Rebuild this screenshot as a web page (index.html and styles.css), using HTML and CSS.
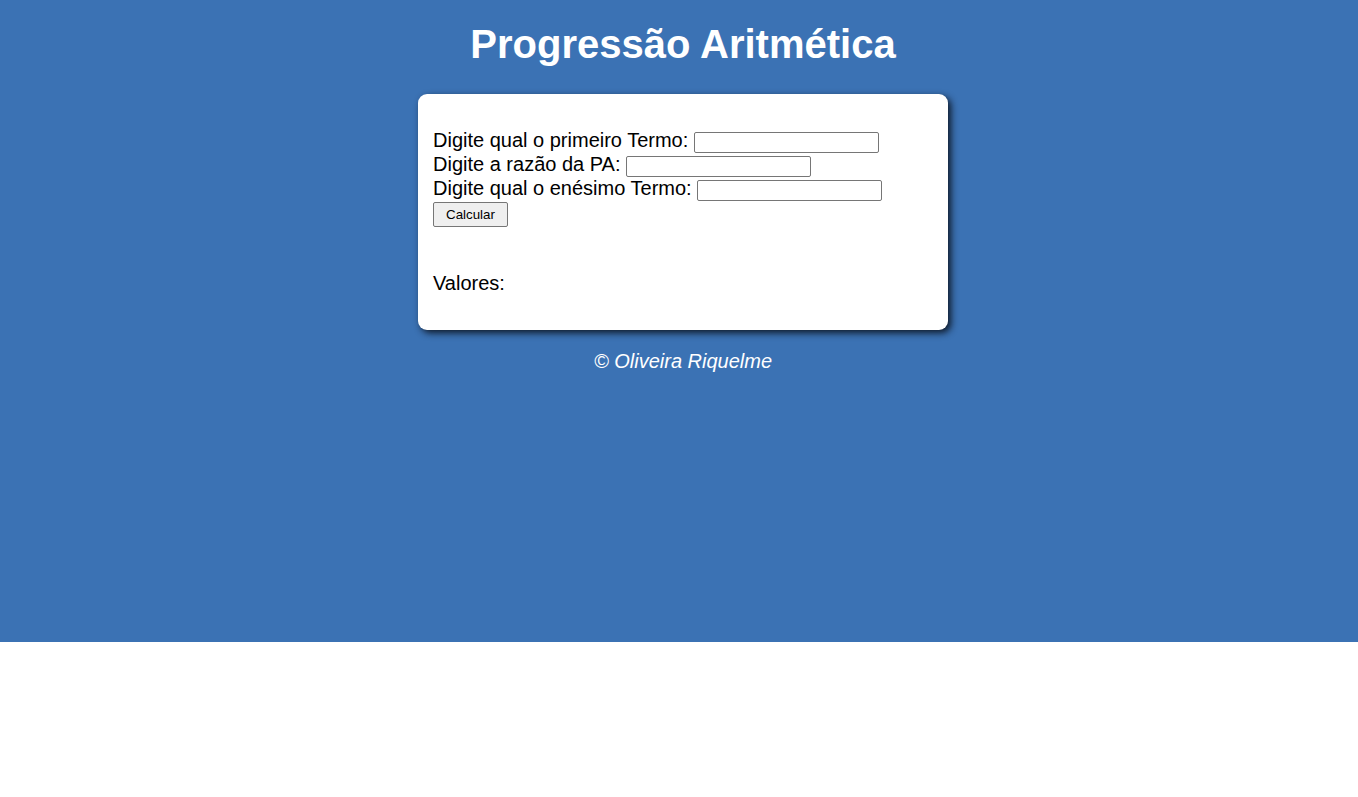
FILE: index.html
```html
<!DOCTYPE html>
<html lang="pt-BR">
<head>
<meta charset="utf-8">
<title>Progressão Aritmética</title>
<link rel="stylesheet" href="styles.css">
</head>
<body>
<div class="page">
  <header class="header">
    <h1 class="title">Progressão Aritmética</h1>
  </header>
  <main class="card">
    <div class="form">
      <div class="row">Digite qual o primeiro Termo: <input type="text" class="field"></div>
      <div class="row">Digite a razão da PA: <input type="text" class="field"></div>
      <div class="row">Digite qual o enésimo Termo: <input type="text" class="field"></div>
      <button class="btn">Calcular</button>
    </div>
    <p class="result">Valores:</p>
  </main>
  <footer class="footer">© Oliveira Riquelme</footer>
</div>
</body>
</html>
```

FILE: styles.css
```css
html, body {
  margin: 0;
  padding: 0;
  background: #ffffff;
}
.page {
  background: #3b72b4;
  height: 642px;
  box-sizing: border-box;
  padding-left: 8px;
  font-family: "Liberation Sans", Arial, sans-serif;
  color: #fff;
  display: flex;
  flex-direction: column;
  align-items: center;
}
.header {
  padding-top: 21px;
}
.title {
  margin: 0;
  font-size: 40px;
  line-height: 46px;
  font-weight: bold;
  color: #fff;
  text-align: center;
}
.card {
  margin-top: 27px;
  width: 530px;
  box-sizing: border-box;
  background: #fff;
  color: #000;
  border-radius: 9px;
  padding: 15px;
  box-shadow: 3px 3px 7px rgba(10, 15, 25, 0.9);
  font-size: 20px;
}
.form {
  margin-top: 19px;
}
.row {
  line-height: 24px;
  height: 24px;
}
.field {
  width: 185px;
  height: 21px;
  box-sizing: border-box;
  border: 1px solid #767676;
  border-radius: 2px;
  padding: 1px 2px;
  vertical-align: 0;
  font-size: 13.33px;
}
.btn {
  display: block;
  margin-top: 2px;
  width: 75px;
  height: 25px;
  padding: 0;
  box-sizing: border-box;
  font-family: "Liberation Sans", Arial, sans-serif;
  font-size: 13.33px;
  color: #000;
  background: #efefef;
  border: 1px solid #767676;
  border-radius: 2px;
}
.result {
  margin: 45px 0 20px;
  line-height: 23px;
}
.footer {
  margin-top: 20px;
  font-size: 20px;
  font-style: italic;
  line-height: 23px;
  color: #fff;
}
```
